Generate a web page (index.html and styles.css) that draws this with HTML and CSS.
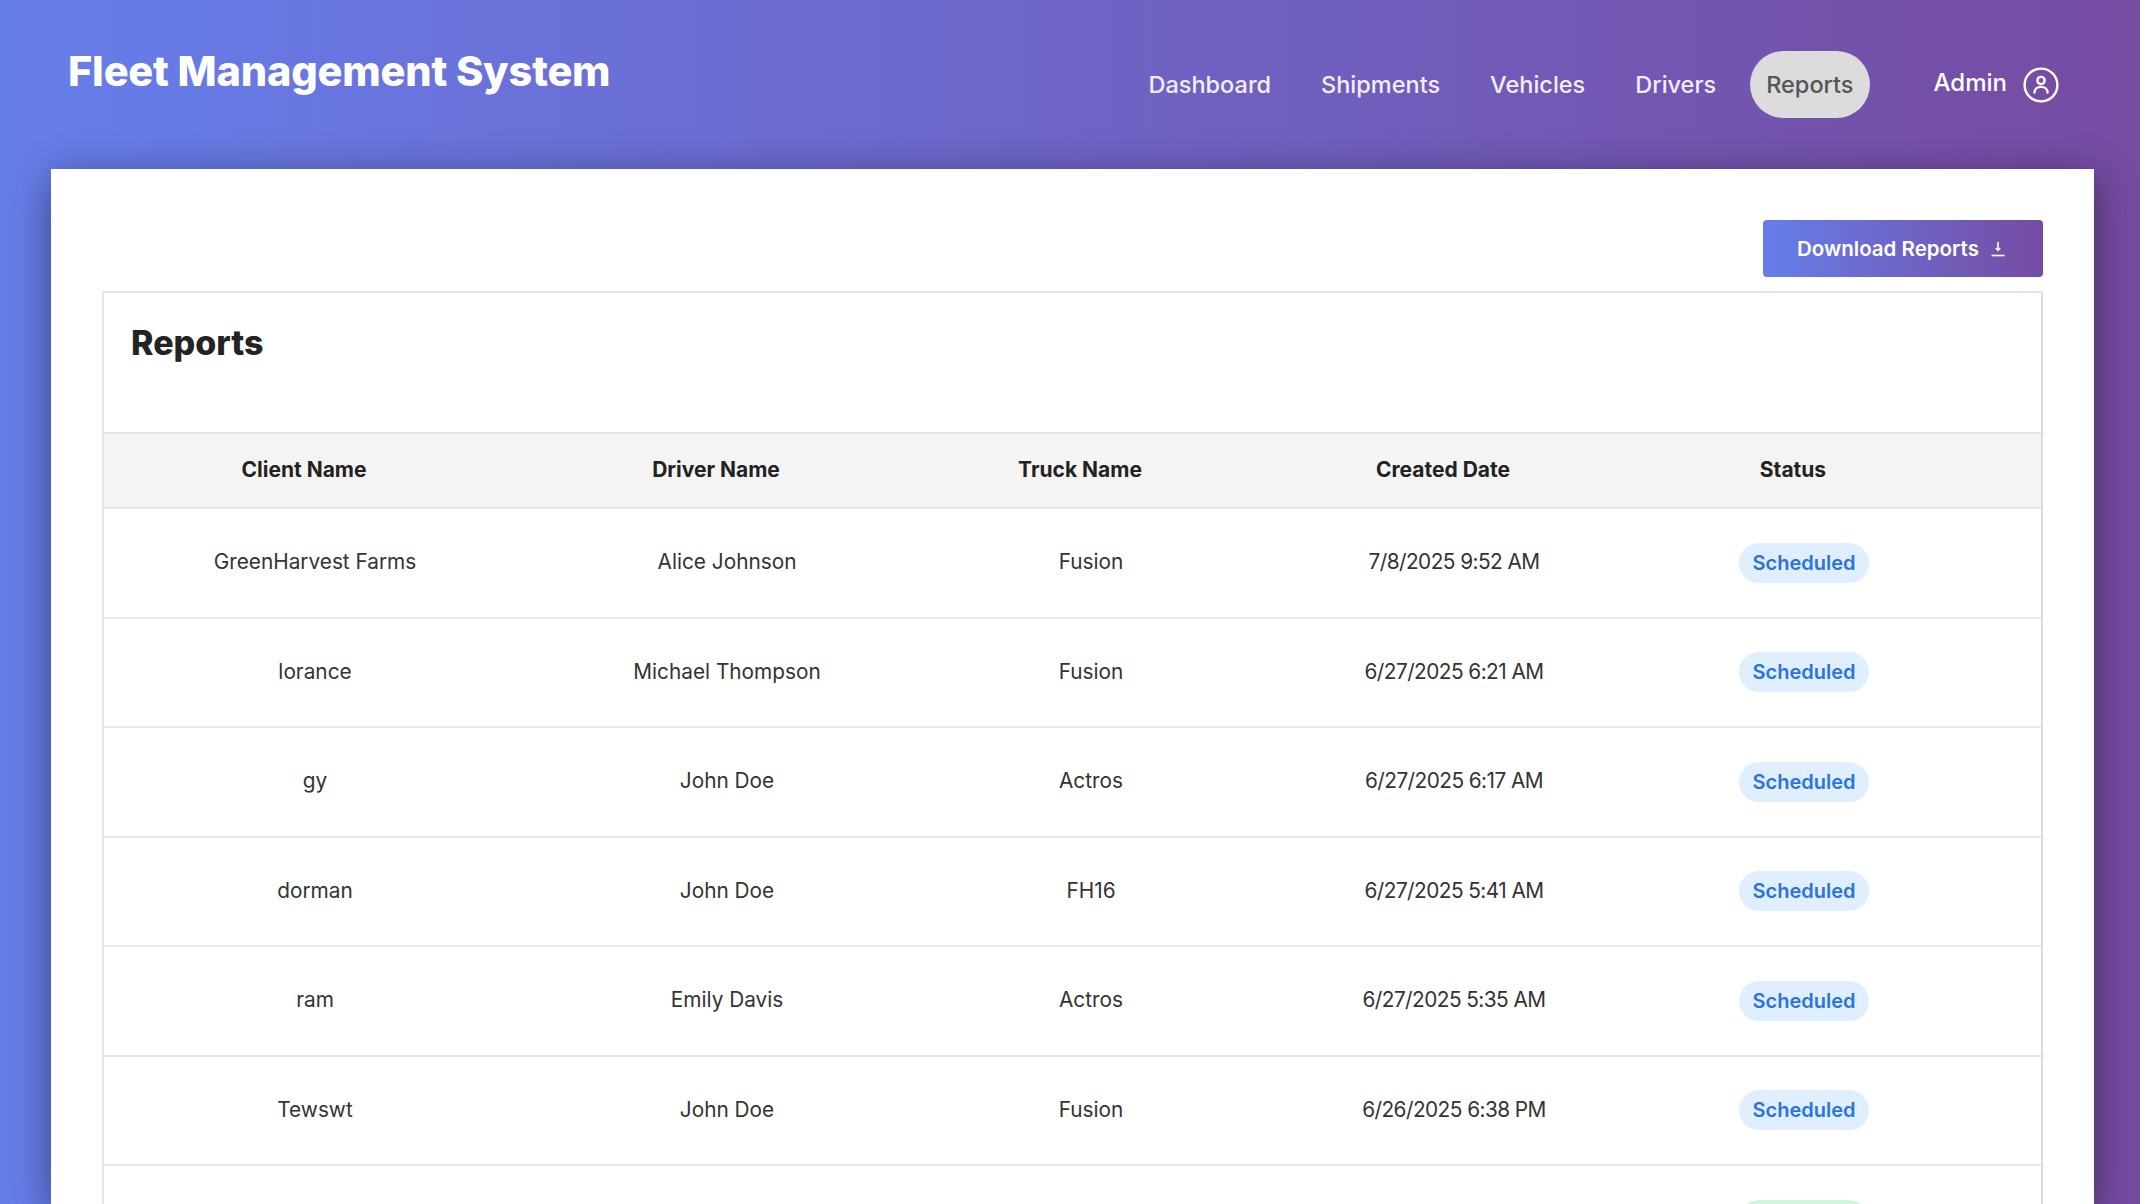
FILE: index.html
```html
<!DOCTYPE html>
<html lang="en">
<head>
<meta charset="utf-8">
<title>Fleet Management System</title>
<link rel="stylesheet" href="styles.css">
</head>
<body>
<header class="topbar">
  <h1 class="brand">Fleet Management System</h1>
  <nav class="nav">
    <a class="nav-link">Dashboard</a>
    <a class="nav-link">Shipments</a>
    <a class="nav-link">Vehicles</a>
    <a class="nav-link">Drivers</a>
    <a class="nav-link active">Reports</a>
    <div class="user">
      <span class="user-name">Admin</span>
      <svg class="user-icon" viewBox="0 0 36 36" fill="none" stroke="currentColor" stroke-width="2.4" stroke-linecap="round"><circle cx="18" cy="18" r="16.4"/><circle cx="18" cy="13.5" r="3.6"/><path d="M11.5 25.5c0-3.6 2.9-5.6 6.5-5.6s6.5 2 6.5 5.6"/></svg>
    </div>
  </nav>
</header>
<main class="card">
  <div class="actions">
    <button class="download">Download Reports
      <svg class="download-icon" viewBox="0 0 14 16" fill="none" stroke="currentColor" stroke-width="1.6"><path d="M7 1v8"/><path d="M4.8 7 7 9.6 9.2 7" stroke-width="1.3"/><path d="M0.5 14.5h13"/></svg>
    </button>
  </div>
  <section class="panel">
    <h2 class="panel-title">Reports</h2>
    <table class="table">
      <colgroup>
        <col class="c1"><col class="c2"><col class="c3"><col class="c4"><col class="c5">
      </colgroup>
      <thead>
        <tr><th>Client Name</th><th>Driver Name</th><th>Truck Name</th><th>Created Date</th><th class="last">Status</th></tr>
      </thead>
      <tbody>
        <tr><td>GreenHarvest Farms</td><td>Alice Johnson</td><td>Fusion</td><td class="date">7/8/2025 9:52 AM</td><td class="last"><span class="badge">Scheduled</span></td></tr>
        <tr><td>lorance</td><td>Michael Thompson</td><td>Fusion</td><td class="date">6/27/2025 6:21 AM</td><td class="last"><span class="badge">Scheduled</span></td></tr>
        <tr><td>gy</td><td>John Doe</td><td>Actros</td><td class="date">6/27/2025 6:17 AM</td><td class="last"><span class="badge">Scheduled</span></td></tr>
        <tr><td>dorman</td><td>John Doe</td><td>FH16</td><td class="date">6/27/2025 5:41 AM</td><td class="last"><span class="badge">Scheduled</span></td></tr>
        <tr><td>ram</td><td>Emily Davis</td><td>Actros</td><td class="date">6/27/2025 5:35 AM</td><td class="last"><span class="badge">Scheduled</span></td></tr>
        <tr><td>Tewswt</td><td>John Doe</td><td>Fusion</td><td class="date">6/26/2025 6:38 PM</td><td class="last"><span class="badge">Scheduled</span></td></tr>
        <tr><td></td><td></td><td></td><td></td><td class="last"><span class="badge green"></span></td></tr>
      </tbody>
    </table>
  </section>
</main>
</body>
</html>
```
FILE: styles.css
```css
* { box-sizing: border-box; }
html, body { margin: 0; height: 100%; overflow: hidden; }
body {
  font-family: Inter, "Noto Sans", sans-serif;
  background: linear-gradient(90deg, #667eea 0%, #764ba2 100%);
  color: #333;
}
.topbar {
  height: 169px;
  display: flex;
  justify-content: space-between;
  align-items: flex-start;
  padding: 0 81px 0 68px;
}
.brand {
  margin: 46px 0 0;
  font-size: 41.5px;
  line-height: 50px;
  font-weight: 800;
  color: #fff;
  letter-spacing: -0.2px;
}
.nav {
  display: flex;
  align-items: center;
  gap: 18px;
  margin-top: 51px;
  height: 67px;
}
.nav-link {
  padding: 0 16px;
  height: 67px;
  display: flex;
  align-items: center;
  border-radius: 34px;
  font-size: 23.5px;
  font-weight: 500;
  color: #f1eef9;
}
.nav-link.active {
  background: #dcdcdc;
  color: #555;
}
.user {
  display: flex;
  align-items: center;
  gap: 16px;
  margin-left: 46px;
  color: #fff;
}
.user-name {
  font-size: 24px;
  font-weight: 500;
  position: relative;
  top: -2px;
}
.user-icon { width: 36px; height: 36px; flex: none; }
.card {
  margin: 0 46px 0 51px;
  height: 1035px;
  padding: 51px;
  overflow: hidden;
  background: #fff;
  box-shadow: 0 10px 40px rgba(0, 0, 0, 0.45);
}
.actions {
  display: flex;
  justify-content: flex-end;
  margin-bottom: 14px;
}
.download {
  width: 280px;
  height: 57px;
  border: 0;
  border-radius: 4px;
  padding: 0 4px 0 0;
  display: flex;
  align-items: center;
  justify-content: center;
  gap: 12px;
  background: linear-gradient(90deg, #667eea, #764ba2);
  color: #fff;
  font-family: inherit;
  font-size: 20.5px;
  font-weight: 600;
}
.download-icon { width: 14px; height: 16px; flex: none; }
.panel {
  border: 2px solid #e6e6e6;
  border-right-color: #dcdcdc;
  background: #fff;
}
.panel-title {
  margin: 0;
  height: 139px;
  padding: 28px 0 0 27px;
  font-size: 34px;
  line-height: 44px;
  font-weight: 800;
  color: #232323;
}
.table {
  width: 100%;
  table-layout: fixed;
  border-collapse: collapse;
}
.c1 { width: 422px; }
.c2 { width: 402px; }
.c3 { width: 326px; }
.c4 { width: 400px; }
.table th {
  height: 75px;
  padding: 0 22px 2px 0;
  background: #f4f4f4;
  border-top: 2px solid #e6e6e6;
  border-bottom: 2px solid #e6e6e6;
  font-size: 21px;
  font-weight: 700;
  color: #222;
}
.table td {
  height: 109.5px;
  padding: 0 0 2px;
  text-align: center;
  border-bottom: 2px solid #e8e8e8;
  font-size: 20.8px;
  font-weight: 400;
  color: #333;
}
.table td.date {
  font-size: 20.8px;
  letter-spacing: -0.55px;
}
.table td.last { padding: 0 87px 0 0; }
.table th.last { padding-right: 109px; }
.badge {
  display: inline-flex;
  align-items: center;
  justify-content: center;
  width: 130px;
  height: 40px;
  border-radius: 20px;
  background: #e0efff;
  color: #2b73de;
  font-size: 20px;
  font-weight: 600;
  vertical-align: middle;
}
.badge.green { background: #d3f5e0; }
```
